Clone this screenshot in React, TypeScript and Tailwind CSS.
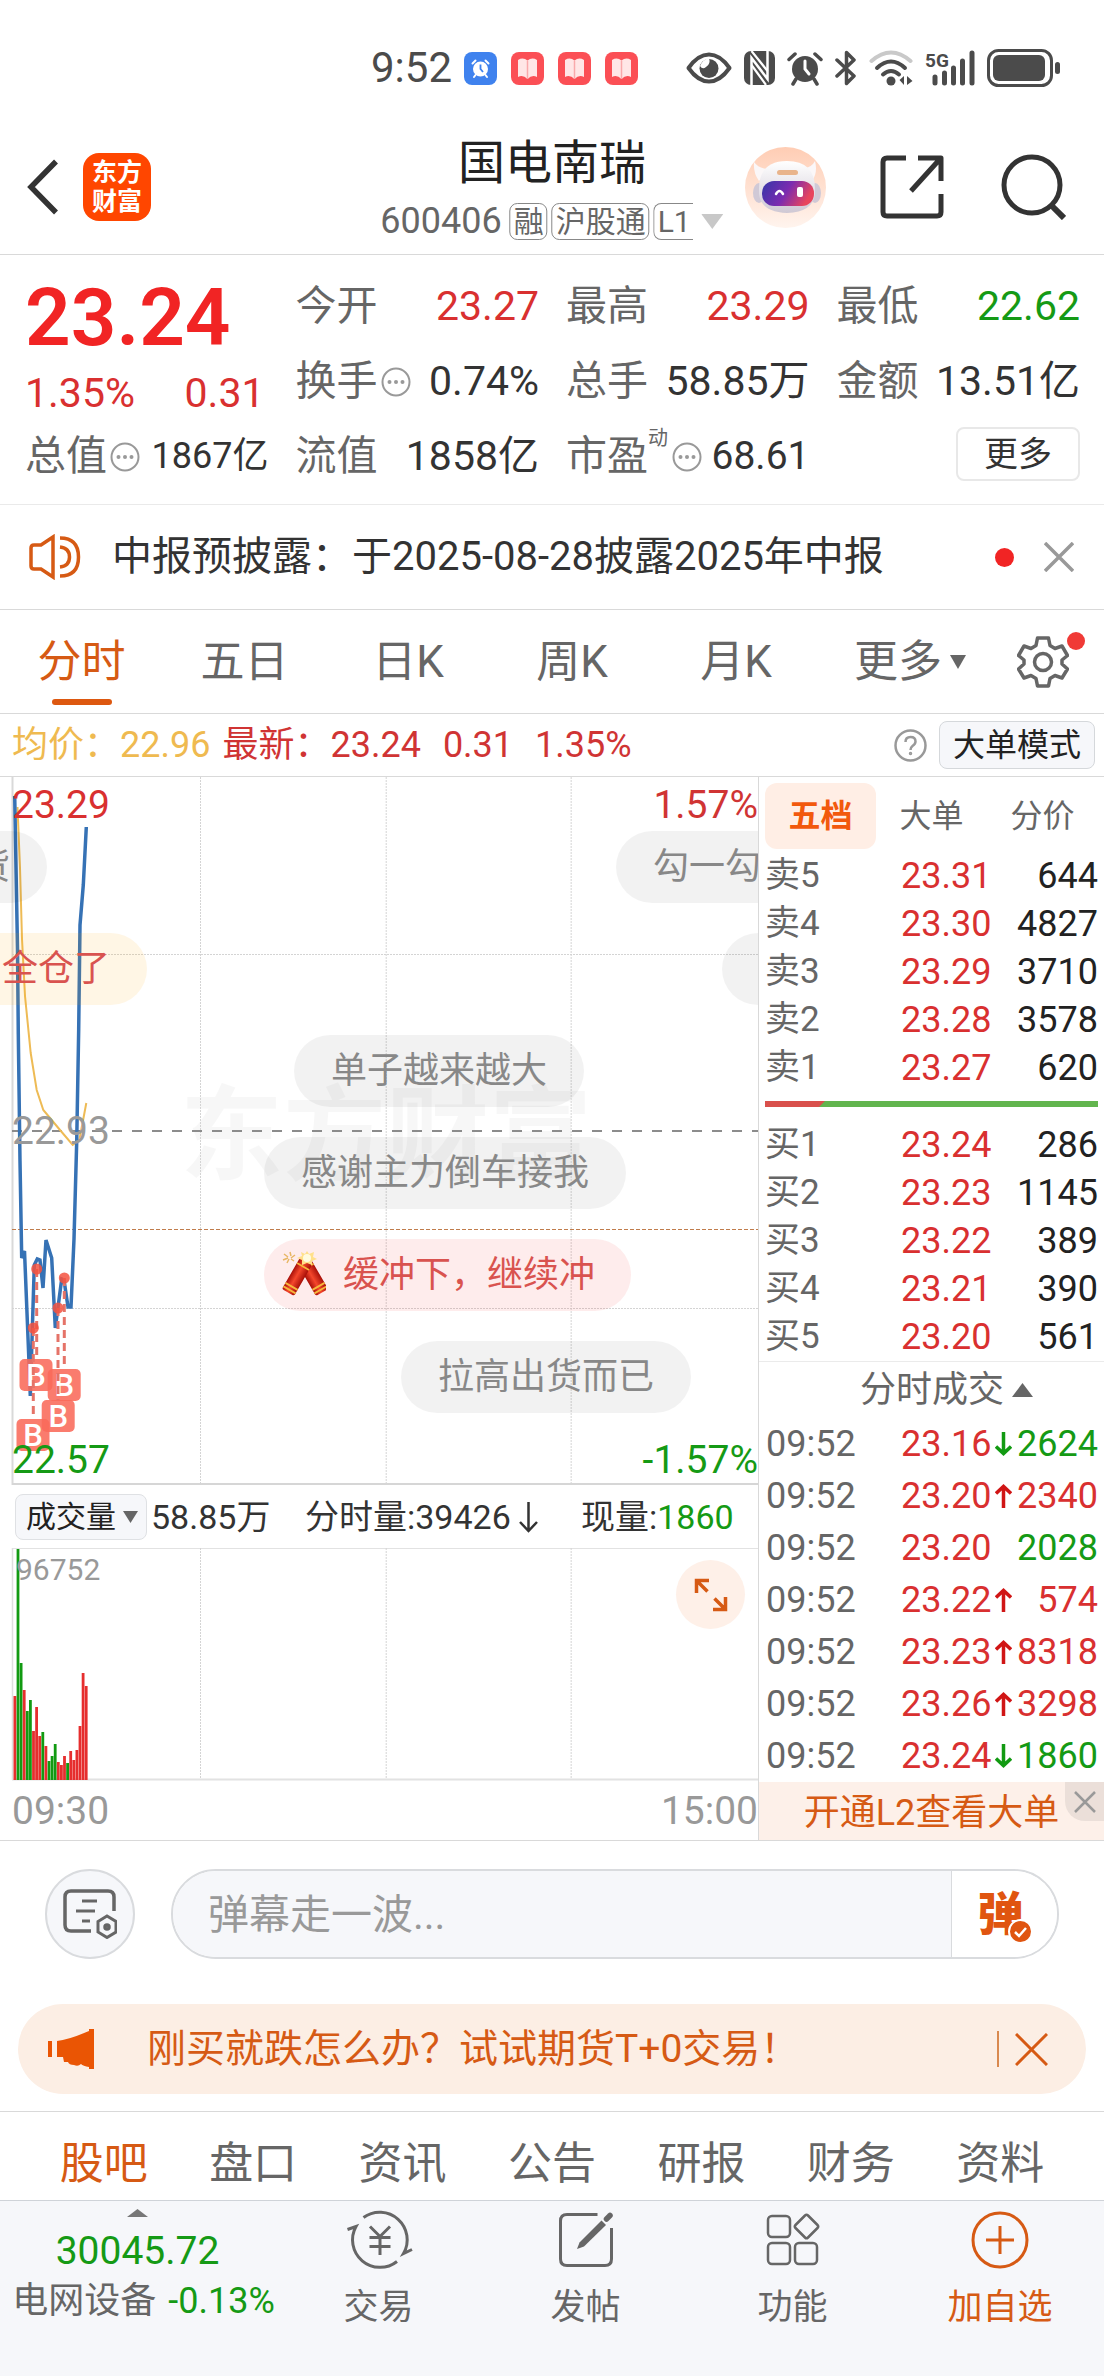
import React from "react";

const stats = {
  open: "23.27",
  high: "23.29",
  low: "22.62",
};

const asks = [
  ["卖5", "23.31", "644"],
  ["卖4", "23.30", "4827"],
  ["卖3", "23.29", "3710"],
  ["卖2", "23.28", "3578"],
  ["卖1", "23.27", "620"],
];

const bids = [
  ["买1", "23.24", "286"],
  ["买2", "23.23", "1145"],
  ["买3", "23.22", "389"],
  ["买4", "23.21", "390"],
  ["买5", "23.20", "561"],
];

type Trade = { price: string; dir: "up" | "down" | ""; qty: string; buy: boolean };
const trades: Trade[] = [
  { price: "23.16", dir: "down", qty: "2624", buy: false },
  { price: "23.20", dir: "up", qty: "2340", buy: true },
  { price: "23.20", dir: "", qty: "2028", buy: false },
  { price: "23.22", dir: "up", qty: "574", buy: true },
  { price: "23.23", dir: "up", qty: "8318", buy: true },
  { price: "23.26", dir: "up", qty: "3298", buy: true },
  { price: "23.24", dir: "down", qty: "1860", buy: false },
];

const volumes: [number, boolean][] = [
  [84, true], [231, false], [117, false], [90, true], [69, false], [80, false],
  [49, true], [73, true], [44, true], [48, false], [34, true], [19, false],
  [24, false], [36, false], [18, true], [15, true], [24, true], [17, false],
  [29, true], [20, true], [30, true], [54, true], [107, true], [94, true],
];

function AlarmGlyph() {
  return (
    <>
      <circle cx="18" cy="18" r="13" fill="currentColor" />
      <path d="M2 8.500 L8 3 M34 8.500 L28 3" stroke="currentColor" strokeWidth="3.500" strokeLinecap="round" fill="none" />
      <path d="M9 28 L6 33 M27 28 L30 33" stroke="currentColor" strokeWidth="3.500" strokeLinecap="round" />
    </>
  );
}

function BookBadge() {
  return (
    <svg width="33" height="33" viewBox="0 0 33 33" aria-hidden="true">
      <rect width="33" height="33" rx="8" fill="#fb4f55" />
      <path d="M7 8 Q12 5 16.500 8.500 Q21 5 26 8 V25 Q21 22.500 16.500 27 Q12 22.500 7 25 Z" fill="#ffe6e6" />
      <path d="M16.500 8.500 V27" stroke="#f9a9ab" strokeWidth="1.500" />
    </svg>
  );
}

function StatusBar() {
  return (
    <div className="flex h-[120px] items-center pl-[371px] pr-[44px] pt-4 text-[#4b4b4b]">
      <span className="w-[93px] text-[42px] leading-[48px]">9:52</span>
      <div className="flex gap-[14px]">
        <svg width="33" height="33" viewBox="0 0 33 33" aria-hidden="true">
          <rect width="33" height="33" rx="8" fill="#3f82ee" />
          <circle cx="16.500" cy="17" r="7.500" fill="#fff" />
          <path d="M8.500 11.500 L11.500 8.500 M24.500 11.500 L21.500 8.500 M11.500 23 L10 25 M21.500 23 L23 25" stroke="#fff" strokeWidth="2" strokeLinecap="round" />
          <path d="M16.500 12.500 V17 L19 20" stroke="#3f82ee" strokeWidth="1.800" fill="none" />
        </svg>
        <BookBadge />
        <BookBadge />
        <BookBadge />
      </div>
      <div className="ml-auto flex items-center">
        <svg className="mr-[12px]" width="46" height="32" viewBox="0 0 46 32" aria-hidden="true">
          <path d="M2.500 16 Q12 2.500 23 2.500 Q34 2.500 43.500 16 Q34 29.500 23 29.500 Q12 29.500 2.500 16 Z" fill="none" stroke="currentColor" strokeWidth="4" strokeLinejoin="round" />
          <circle cx="23" cy="16.500" r="9.500" fill="currentColor" />
          <path d="M23 6 Q25 12 20 15 Q16.500 18 14 14 Q16 8 23 6 Z" fill="#fff" />
        </svg>
        <svg className="mr-[12px]" width="31" height="34" viewBox="0 0 31 34" aria-hidden="true">
          <rect width="31" height="34" rx="7" fill="currentColor" />
          <path d="M7.500 34 V7 L23.500 28 V0" fill="none" stroke="#fff" strokeWidth="2.500" />
          <path d="M7.500 0 L23.500 20 M7.500 14 L22 34" stroke="#fff" strokeWidth="2.200" />
        </svg>
        <svg className="mr-[12px]" width="36" height="35" viewBox="0 0 36 35" aria-hidden="true">
          <AlarmGlyph />
          <path d="M18 10 V18 L22 23" stroke="#fff" strokeWidth="3" strokeLinecap="round" fill="none" />
        </svg>
        <svg className="mr-[12px]" width="22" height="36" viewBox="0 0 22 36" aria-hidden="true">
          <path d="M2 10 L19 26 L11.500 33.500 V2.500 L19 10 L2 26" fill="none" stroke="currentColor" strokeWidth="3.500" strokeLinejoin="round" strokeLinecap="round" />
        </svg>
        <svg className="mr-[11px]" width="45" height="36" viewBox="0 0 45 36" aria-hidden="true" fill="none" strokeWidth="4" strokeLinecap="round">
          <path d="M2.500 11 Q22 -6 41.500 11" stroke="#c9c9c9" />
          <path d="M8 18 Q22 5 36 18" stroke="currentColor" />
          <path d="M14 24.500 Q22 17.500 30 24.500" stroke="currentColor" />
          <circle cx="22" cy="31" r="4.500" fill="currentColor" />
          <path d="M30.500 30 L35 26 V35 Z M38 26 V35 L43.500 31 Z" fill="currentColor" />
        </svg>
        <svg className="mr-[12px] overflow-visible" width="50" height="36" viewBox="0 0 50 36" aria-hidden="true">
          <text x="0" y="17" fontSize="19" fontWeight="700" fill="currentColor">5G</text>
          <path d="M10 27 V33 M19.500 23 V33 M28.500 18 V33 M37.500 11 V33 M47 3 V33" stroke="currentColor" strokeWidth="5" strokeLinecap="round" />
        </svg>
        <svg width="73" height="38" viewBox="0 0 73 38" aria-hidden="true">
          <rect x="1.500" y="1.500" width="63" height="35" rx="10" fill="none" stroke="currentColor" strokeWidth="3" />
          <rect x="6" y="6" width="52" height="26" rx="6" fill="currentColor" />
          <rect x="68" y="13" width="5" height="12" rx="2.500" fill="currentColor" />
        </svg>
      </div>
    </div>
  );
}

function Robot() {
  return (
    <svg width="81" height="81" viewBox="0 0 81 81" aria-hidden="true">
      <defs>
        <linearGradient id="halo" x1="0" y1="0" x2="0" y2="1">
          <stop offset="0" stopColor="#ffcdb4" />
          <stop offset="1" stopColor="#fff4ee" />
        </linearGradient>
        <linearGradient id="visor" x1="0" y1="0" x2="1" y2="0.300">
          <stop offset="0" stopColor="#3437a8" />
          <stop offset="0.550" stopColor="#7b2bb0" />
          <stop offset="1" stopColor="#e8455d" />
        </linearGradient>
        <linearGradient id="shell" x1="0" y1="0" x2="0" y2="1">
          <stop offset="0" stopColor="#ffffff" />
          <stop offset="1" stopColor="#cfc8d4" />
        </linearGradient>
      </defs>
      <circle cx="40.500" cy="40.500" r="40.500" fill="url(#halo)" />
      <path d="M9 15 Q8 26 14 34 L24 22 Q14 22 9 15 Z M70 14 Q73 26 67 34 L56 21 Q66 22 70 14 Z" fill="#fbf7f8" />
      <ellipse cx="14" cy="46" rx="6" ry="10" fill="#d0c9d6" />
      <ellipse cx="70" cy="46" rx="6" ry="10" fill="#d0c9d6" />
      <path d="M14 42 Q14 14 42 14 Q70 14 70 42 V47 Q68 65 42 66 Q16 65 14 47 Z" fill="url(#shell)" />
      <rect x="32" y="23" width="21" height="5" rx="2.500" fill="#e9b48c" />
      <rect x="17" y="34" width="52" height="25" rx="12" fill="url(#visor)" />
      <path d="M31 47 Q34.500 41 38 47" fill="none" stroke="#fff" strokeWidth="2.500" strokeLinecap="round" />
      <rect x="52" y="40" width="6" height="10" rx="2" fill="#fff" />
    </svg>
  );
}

function Header() {
  return (
    <header className="relative flex h-[135px] items-center justify-between border-b border-[#d9d9d9] pl-[26px] pr-[38px]">
      <div className="flex items-center gap-[25px]">
        <button aria-label="返回">
          <svg width="32" height="56" viewBox="0 0 32 56" fill="none" stroke="#333" strokeWidth="5.500">
            <path d="M30 2.500 L5 28 L30 53.500" />
          </svg>
        </button>
        <button className="flex size-[68px] flex-col items-center justify-center rounded-2xl bg-[#ff4600] text-[25px] font-bold leading-[29px] text-white">
          <span>东方</span>
          <span>财富</span>
        </button>
      </div>
      <div className="absolute left-1/2 top-1/2 flex -translate-x-1/2 -translate-y-1/2 flex-col items-center pt-3">
        <h1 className="text-[47px] leading-[56px] text-[#222]">国电南瑞</h1>
        <button className="flex h-[60px] items-center gap-1 text-[30px] leading-[35px] text-[#666]">
          <span className="mr-1 text-[36px]">600406</span>
          <span className="rounded-lg border border-[#888] px-[3px]">融</span>
          <span className="rounded-lg border border-[#888] px-[3px]">沪股通</span>
          <span className="rounded-l-lg border border-r-0 border-[#888] px-[3px]">L1</span>
          <svg className="ml-1" width="22" height="15" viewBox="0 0 22 15" aria-hidden="true">
            <path d="M0 0 H22 L11 15 Z" fill="#c8c8c8" />
          </svg>
        </button>
      </div>
      <div className="flex items-center">
        <button aria-label="智能助手" className="mr-[54px]">
          <Robot />
        </button>
        <button aria-label="分享" className="mr-[57px]">
          <svg width="64" height="64" viewBox="0 0 64 64" fill="none" stroke="#333" strokeWidth="5">
            <path d="M26 3 H7 Q3 3 3 7 V57 Q3 61 7 61 H57 Q61 61 61 57 V39 M38 3 H61 V26 M60 4 L31 36" strokeLinejoin="round" />
          </svg>
        </button>
        <button aria-label="搜索">
          <svg width="65" height="66" viewBox="0 0 65 66" fill="none" stroke="#333" strokeWidth="5">
            <circle cx="31" cy="31" r="28" />
            <path d="M50 51 L63 64" strokeWidth="6" />
          </svg>
        </button>
      </div>
    </header>
  );
}

function More() {
  return (
    <svg className="shrink-0" width="30" height="30" viewBox="0 0 30 30" aria-hidden="true">
      <circle cx="15" cy="15" r="13.500" fill="none" stroke="#999" strokeWidth="2" />
      <circle cx="8.500" cy="15" r="2" fill="#999" />
      <circle cx="15" cy="15" r="2" fill="#999" />
      <circle cx="21.500" cy="15" r="2" fill="#999" />
    </svg>
  );
}

function Stat({ label, value, tone, info }: { label: string; value: string; tone: string; info?: boolean }) {
  return (
    <div className="flex items-center justify-between whitespace-nowrap text-[41px] leading-[75px]">
      <dt className="flex items-center gap-[3px] text-[#666]">
        {label}
        {info && <More />}
      </dt>
      <dd className={tone}>{value}</dd>
    </div>
  );
}

function Quote() {
  return (
    <section className="border-b border-[#eaeaea] pl-[25px] pr-6 pb-[10px] pt-[14px]">
      <dl className="grid grid-cols-4 grid-rows-[75px_75px_75px] gap-x-[27px]">
        <div className="row-span-2 pt-2 text-[#d93030]">
          <dd className="text-[80px] font-semibold leading-[82px] text-[#f12424]">23.24</dd>
          <dd className="flex justify-between pr-1 text-[41px] leading-[68px]">
            <span>1.35%</span>
            <span>0.31</span>
          </dd>
        </div>
        <Stat label="今开" value={stats.open} tone="text-[#d93030]" />
        <Stat label="最高" value={stats.high} tone="text-[#d93030]" />
        <Stat label="最低" value={stats.low} tone="text-[#159a15]" />
        <Stat label="换手" value="0.74%" tone="text-[#333]" info />
        <Stat label="总手" value="58.85万" tone="text-[#333]" />
        <Stat label="金额" value="13.51亿" tone="text-[#333]" />
        <div className="flex items-center justify-between whitespace-nowrap leading-[75px]">
          <dt className="flex items-center gap-[3px] text-[41px] text-[#666]">
            总值
            <More />
          </dt>
          <dd className="text-[36px] text-[#333]">1867亿</dd>
        </div>
        <Stat label="流值" value="1858亿" tone="text-[#333]" />
        <div className="flex items-center justify-between whitespace-nowrap leading-[75px]">
          <dt className="flex items-center text-[41px] text-[#666]">
            市盈
            <span className="self-start pt-[7px] text-[20px] leading-6">动</span>
            <span className="ml-1"><More /></span>
          </dt>
          <dd className="text-[39px] text-[#333]">68.61</dd>
        </div>
        <div className="flex items-start justify-end pt-2">
          <button className="h-[54px] w-[124px] rounded-lg border-2 border-[#e8e8e8] text-[34px] leading-[46px] text-[#333]">更多</button>
        </div>
      </dl>
    </section>
  );
}

function Notice() {
  return (
    <section className="flex h-[105px] items-center border-b border-[#d9d9d9] pl-[29px] pr-[30px]">
      <svg width="52" height="46" viewBox="0 0 52 46" fill="none" stroke="#d65a14" strokeWidth="3.500" aria-hidden="true">
        <path d="M24 3 L12 11 H5 Q2 11 2 14 V32 Q2 35 5 35 H12 L24 43 Z" />
        <path d="M31 4 Q49.500 4 49.500 23 Q49.500 42 31 42 M31 13 Q40.500 14 40.500 23 Q40.500 32 31 33" />
      </svg>
      <p className="ml-[31px] flex-1 whitespace-nowrap text-[40px] leading-[48px] text-[#333]">中报预披露：于2025-08-28披露2025年中报</p>
      <span className="mr-[30px] size-[19px] rounded-full bg-[#f12424]" />
      <button aria-label="关闭">
        <svg width="30" height="30" viewBox="0 0 30 30" stroke="#999" strokeWidth="3.500">
          <path d="M1 1 L29 29 M29 1 L1 29" />
        </svg>
      </button>
    </section>
  );
}

function PeriodTabs() {
  return (
    <nav className="grid h-[104px] grid-cols-[163fr_163fr_164fr_164fr_164fr_184fr_82fr] border-b border-[#d9d9d9] pr-5 text-[44px] leading-[60px] text-[#666]">
      <button className="relative text-[#d65a14]">
        分时
        <span className="absolute bottom-[8px] left-1/2 h-1.5 w-[60px] -translate-x-1/2 rounded-full bg-[#dd5810]" />
      </button>
      <button>五日</button>
      <button>日K</button>
      <button>周K</button>
      <button>月K</button>
      <button className="flex items-center justify-center gap-2">
        更多
        <svg width="16" height="14" viewBox="0 0 16 14" aria-hidden="true"><path d="M0 0 H16 L8 14 Z" fill="#666" /></svg>
      </button>
      <button aria-label="设置" className="flex items-center justify-center">
        <span className="relative">
          <svg width="52" height="52" viewBox="0 0 52 52" fill="none" stroke="#666" strokeWidth="3.500" strokeLinejoin="round">
            <path d="M20.500 2 H31.500 L33 9.500 L38 12.500 L45 10 L50.500 19.500 L45 24 V28 L50.500 33 L45 42 L38 39.500 L33 42.500 L31.500 50 H20.500 L19 42.500 L14 39.500 L7 42 L1.500 33 L7 28 V24 L1.500 19.500 L7 10 L14 12.500 L19 9.500 Z" />
            <circle cx="26" cy="26" r="8.500" />
          </svg>
          <span className="absolute -right-4 -top-1 size-[18px] rounded-full bg-[#f03a36]" />
        </span>
      </button>
    </nav>
  );
}

function Summary() {
  return (
    <section className="flex h-[63px] items-center whitespace-nowrap border-b border-[#d9d9d9] pl-3 pr-[9px] text-[36px] leading-[48px] text-[#d03434]">
      <span className="mr-3 text-[#efba50]">均价：22.96</span>
      <span>最新：23.24</span>
      <span className="ml-[22px]">0.31</span>
      <span className="ml-[22px]">1.35%</span>
      <button aria-label="帮助" className="ml-auto mr-3">
        <svg width="33" height="33" viewBox="0 0 33 33" fill="none" stroke="#999">
          <circle cx="16.500" cy="16.500" r="15" strokeWidth="2.500" />
          <path d="M11.500 13 Q11.500 8 16.500 8 Q21.500 8 21.500 12.500 Q21.500 15 18.500 17 Q16.500 18.500 16.500 21" strokeWidth="2.500" />
          <circle cx="16.500" cy="24.500" r="1" strokeWidth="1.500" />
        </svg>
      </button>
      <button className="h-12 rounded-lg border border-[#d5d8db] bg-[#f6f7fa] px-[13px] text-[32px] leading-[44px] text-[#222]">大单模式</button>
    </section>
  );
}

const marks = [
  { x: 36.7, y: 492, bx: 19.5, by: 582 },
  { x: 64.3, y: 501, bx: 47.7, by: 592 },
  { x: 58, y: 531, bx: 41.7, by: 623 },
  { x: 33.3, y: 551, bx: 16.5, by: 642 },
];

const pill = "absolute flex h-[72px] items-center whitespace-nowrap rounded-full px-[37px] text-[36px] leading-[68px]";

function Firecracker() {
  return (
    <svg className="mr-[17px]" width="46" height="48" viewBox="0 0 46 48" aria-hidden="true">
      <defs>
        <linearGradient id="tube" x1="0" y1="0" x2="1" y2="0">
          <stop offset="0" stopColor="#a80f08" />
          <stop offset="0.450" stopColor="#f5472c" />
          <stop offset="1" stopColor="#a80f08" />
        </linearGradient>
      </defs>
      <path d="M10 1 L11 5 M4 3 L8 6 M3 9 L8 7 M7 12 L9 8 M15 4 L11 7 M14 10 L11 8" stroke="#e8b765" strokeWidth="1.500" />
      <g transform="rotate(-30 25 12)">
        <rect x="18" y="12" width="14" height="34" rx="2" fill="url(#tube)" />
        <path d="M18 17 H32 M18 39 H32 M18 43 H32" stroke="#f6b73c" strokeWidth="1.800" />
      </g>
      <g transform="rotate(30 25 12)">
        <rect x="18" y="10" width="14" height="36" rx="2" fill="url(#tube)" />
        <path d="M18 16 H32 M18 39 H32 M18 43 H32" stroke="#f6b73c" strokeWidth="1.800" />
      </g>
      <path d="M27 0 L29 3 L34 1 L33 6 L37 8 L32 10 L32 14 L27 12 L22 14 L22 9 L17 7 L22 5 L21 1 L25 3 Z" fill="#ffe08a" />
      <circle cx="27" cy="7" r="4" fill="#fffbe0" />
    </svg>
  );
}

function PriceChart() {
  return (
    <div className="relative h-[708px] overflow-hidden">
      <div className="absolute bottom-[288px] left-[180px] select-none whitespace-nowrap text-[103px] font-bold leading-[120px] text-black/3" aria-hidden="true">东方财富</div>
      <svg className="absolute inset-0 h-full w-full" aria-hidden="true" fill="none">
        <path d="M12.500 0 V708" stroke="#d9d9d9" strokeWidth="2" />
        <g stroke="#d4d4d4" strokeDasharray="2 1">
          <line x1="26.450%" x2="26.450%" y1="0" y2="708" />
          <line x1="50.950%" x2="50.950%" y1="0" y2="708" />
          <line x1="75.350%" x2="75.350%" y1="0" y2="708" />
          <line x1="12" x2="100%" y1="177.500" y2="177.500" />
          <line x1="12" x2="100%" y1="531.500" y2="531.500" />
        </g>
        <line x1="12" x2="100%" y1="707" y2="707" stroke="#d6d6d6" strokeWidth="2" />
        <line x1="12" x2="100%" y1="354" y2="354" stroke="#8c8c8c" strokeWidth="2" strokeDasharray="10 10" />
        <line x1="12" x2="100%" y1="452.500" y2="452.500" stroke="#c07c4c" strokeWidth="1" strokeDasharray="4 2" />
        <path d="M17.500 30 L20 91 L22 162 L25 219 L30.700 276 L36.700 313 L43.300 333 L50 341 L60 353 L72.700 368 L79.300 363 L83.300 342 L86.300 326" stroke="#eebb55" strokeWidth="2" />
        <path d="M14.700 19 L17.500 172 L18.300 257 L20 384 L21.700 481 L24.500 474 L28.500 573 L30.300 619 L32.700 540 L34.300 488 L37.300 482 L40 483 L43 511 L46 463 L51.700 481 L55.300 551 L61.700 502 L64 503 L68 530 L71 530 L74 462 L76.700 365 L78.700 252 L80 148 L83.300 108 L86.300 50" stroke="#3672b5" strokeWidth="3.500" />
      </svg>
      <span className="absolute left-3 top-[4px] text-[39px] leading-[48px] text-[#d93030]">23.29</span>
      <span className="absolute right-0 top-[4px] text-[39px] leading-[48px] text-[#d03434]">1.57%</span>
      <span className="absolute left-3 top-[330px] text-[39px] leading-[48px] text-[#999]">22.93</span>
      <span className="absolute right-0 bottom-[1px] text-[39px] leading-[48px] text-[#159a15]">-1.57%</span>

      <svg className="absolute left-0 top-0" width="90" height="708" aria-hidden="true">
        {marks.map((m) => (
          <g key={m.by}>
            <line x1={m.x} x2={m.x} y1={m.y} y2={m.by} stroke="#e57368" strokeWidth="3" strokeDasharray="8 5" />
            <circle cx={m.x} cy={m.y} r="5.500" fill="#f4523f" opacity="0.850" />
            <rect x={m.bx} y={m.by} width="33" height="32" rx="5" fill="#f96a5a" opacity="0.880" />
            <text x={m.bx + 16.5} y={m.by + 27} fontSize="31" fontWeight="500" fill="#fff" textAnchor="middle">B</text>
          </g>
        ))}
      </svg>
      <span className="absolute bottom-[1px] left-3 text-[39px] leading-[48px] text-[#159a15]">22.57</span>

      <span className={`${pill} right-[711px] top-[54px] bg-black/5 text-[#888]`}>拉高出货</span>
      <span className={`${pill} left-[616px] top-[54px] bg-black/5 text-[#888]`}>勾一勾</span>
      <span className={`${pill} right-[611px] top-[156px] bg-[#ffab00]/10 text-[#d9534f]`}>全仓了</span>
      <span className={`${pill} left-[722px] top-[156px] bg-black/5 text-[#888]`}>冲</span>
      <span className={`${pill} left-[294px] top-[258px] bg-black/5 text-[#888]`}>单子越来越大</span>
      <span className={`${pill} left-[264px] top-[360px] bg-black/5 text-[#888]`}>感谢主力倒车接我</span>
      <span className="absolute left-[264px] top-[462px] flex h-[72px] items-center whitespace-nowrap rounded-full bg-[#f03030]/9 pl-4 pr-[36px] text-[36px] leading-[68px] text-[#d9534f]">
        <Firecracker />
        缓冲下，继续冲
      </span>
      <span className={`${pill} left-[401px] top-[564px] bg-black/5 text-[#888]`}>拉高出货而已</span>
    </div>
  );
}

function VolumeChart() {
  return (
    <>
      <div className="flex h-[63px] items-center whitespace-nowrap pl-[15px] text-[34px] leading-[48px] text-[#333]">
        <div className="relative mr-1">
          <select aria-label="指标" className="block h-[46px] w-[132px] appearance-none rounded-lg border border-[#dfe1e4] bg-[#f6f7fa] pl-[10px] text-[30px] leading-[42px] text-[#222]">
            <option>成交量</option>
          </select>
          <svg className="pointer-events-none absolute right-[9px] top-[17px]" width="15" height="12" viewBox="0 0 15 12" aria-hidden="true"><path d="M0 0 H15 L7.500 12 Z" fill="#666" /></svg>
        </div>
        <span className="w-[154px]">58.85万</span>
        <span className="flex w-[276px] items-center">
          分时量:39426
          <svg className="ml-2" width="19" height="32" viewBox="0 0 19 32" fill="none" stroke="#333" strokeWidth="2.500" aria-hidden="true"><path d="M9.500 1 V30 M1 21 L9.500 30 L18 21" /></svg>
        </span>
        <span>现量:<span className="text-[#159a15]">1860</span></span>
      </div>
      <div className="relative h-[233px]">
        <svg className="absolute inset-0 h-full w-full" aria-hidden="true">
          <line x1="12" x2="100%" y1="0.500" y2="0.500" stroke="#e2e2e2" />
          <line x1="12.500" x2="12.500" y1="0" y2="232" stroke="#dedede" strokeWidth="1.500" />
          <g stroke="#d4d4d4" strokeDasharray="2 1">
            <line x1="26.450%" x2="26.450%" y1="0" y2="232" />
            <line x1="50.950%" x2="50.950%" y1="0" y2="232" />
            <line x1="75.350%" x2="75.350%" y1="0" y2="232" />
          </g>
          <line x1="12" x2="100%" y1="231.500" y2="231.500" stroke="#e2e2e2" strokeWidth="2" />
          {volumes.map(([h, up], i) => (
            <rect key={i} x={13.5 + i * 3.1} y={232 - h} width="2.800" height={h} fill={up ? "#e62e2e" : "#129a12"} />
          ))}
        </svg>
        <span className="absolute left-4 top-1 text-[30px] leading-9 text-[#999]">96752</span>
        <button aria-label="放大" className="absolute right-[13px] top-3 flex size-[69px] items-center justify-center rounded-full bg-[#fef0e8]">
          <svg width="36" height="36" viewBox="0 0 36 36" fill="none" stroke="#d65a14" strokeWidth="3.500">
            <path d="M3.500 16 V3.500 H16 M4 4 L14.500 14.500 M32.500 20 V32.500 H20 M32 32 L21.500 21.500" />
          </svg>
        </button>
      </div>
      <div className="flex h-[59px] items-center justify-between pl-3 text-[39px] leading-[48px] text-[#999]">
        <span>09:30</span>
        <span>15:00</span>
      </div>
    </>
  );
}

function Levels({ rows, label }: { rows: string[][]; label: string }) {
  return (
    <table aria-label={label} className="w-full table-fixed text-[36px] leading-[48px]">
      <tbody>
        {rows.map(([name, price, qty]) => (
          <tr key={name} className="h-12">
            <th scope="row" className="w-[136px] text-left text-[35px] font-normal text-[#666]">{name}</th>
            <td className="w-[92px] text-[#d93030]">{price}</td>
            <td className="text-right text-[#222]">{qty}</td>
          </tr>
        ))}
      </tbody>
    </table>
  );
}

function Arrow({ up }: { up: boolean }) {
  return up ? (
    <svg width="17" height="24" viewBox="0 0 17 24" fill="none" stroke="#d01515" strokeWidth="3.500" aria-label="升"><path d="M8.500 24 V3 M1 9.500 L8.500 2.500 L16 9.500" /></svg>
  ) : (
    <svg width="17" height="24" viewBox="0 0 17 24" fill="none" stroke="#129a12" strokeWidth="3.500" aria-label="降"><path d="M8.500 0 V21 M1 14.500 L8.500 21.500 L16 14.500" /></svg>
  );
}

function OrderPanel() {
  return (
    <aside className="flex w-[346px] shrink-0 flex-col border-l border-[#d9d9d9]">
      <div className="px-1.5 pt-1.5">
        <div className="mb-[3px] grid h-[66px] grid-cols-3 text-[32px] text-[#666]">
          <button className="rounded-xl bg-[#ffeee5] font-bold text-[#f2590d]">五档</button>
          <button>大单</button>
          <button>分价</button>
        </div>
        <Levels rows={asks} label="卖盘" />
        <svg className="mb-[14px] mt-[9px] block h-1.5 w-full" viewBox="0 0 333 6" preserveAspectRatio="none" aria-hidden="true">
          <rect width="333" height="6" fill="#62b54e" />
          <path d="M0 0 H60 L54 6 H0 Z" fill="#d9504c" />
        </svg>
        <Levels rows={bids} label="买盘" />
      </div>
      <button className="flex h-[57px] items-center justify-center gap-2 border-t border-[#ebebeb] pl-[30px] text-[36px] leading-[48px] text-[#666]">
        分时成交
        <svg width="21" height="14" viewBox="0 0 21 14" aria-hidden="true"><path d="M0 14 L10.500 0 L21 14 Z" fill="#666" /></svg>
      </button>
      <table aria-label="分时成交" className="w-full table-fixed text-[36px] leading-[52px]">
        <tbody>
          {trades.map((t, i) => (
            <tr key={i} className="h-[52px]">
              <td className="w-[142px] pl-[7px] text-[#666]">09:52</td>
              <td className="w-[94px] text-[#d93030]">{t.price}</td>
              <td className="w-[17px]">{t.dir && <Arrow up={t.dir === "up"} />}</td>
              <td className={t.buy ? "pr-1.5 text-right text-[#d93030]" : "pr-1.5 text-right text-[#159a15]"}>{t.qty}</td>
            </tr>
          ))}
        </tbody>
      </table>
      <div className="relative h-[58px] bg-[#fdf0e9]">
        <a href="#l2" className="block text-center text-[36px] leading-[62px] text-[#d65a14]">开通L2查看大单</a>
        <button aria-label="关闭" className="absolute right-0 top-0 flex h-[39px] w-[39px] items-center justify-center rounded-bl-[20px] bg-[#ebdfd9]">
          <svg width="22" height="22" viewBox="0 0 22 22" stroke="#999" strokeWidth="2.500"><path d="M1 1 L21 21 M21 1 L1 21" /></svg>
        </button>
      </div>
    </aside>
  );
}

function Composer() {
  return (
    <section className="flex h-[90px] gap-9 pl-[45px] pr-[45px]">
      <button aria-label="弹幕设置" className="flex size-[90px] shrink-0 items-center justify-center rounded-full border-2 border-[#d9dbde] bg-[#f6f7fa]">
        <svg width="54" height="50" viewBox="0 0 54 50" fill="none" stroke="#666" strokeWidth="3.500">
          <path d="M28 42 H8 Q2 42 2 36 V8 Q2 2 8 2 H45 Q51 2 51 8 V22" />
          <path d="M19 12 H34 M13 22 H32 M19 32 H27" strokeWidth="3" />
          <path d="M44 27 L53 32.500 V43 L44 48.500 L35 43 V32.500 Z" strokeWidth="3" />
          <circle cx="44" cy="38" r="2" />
        </svg>
      </button>
      <div className="flex flex-1 overflow-hidden rounded-full border-2 border-[#d9dbde]">
        <input aria-label="弹幕" placeholder="弹幕走一波..." className="min-w-0 flex-1 bg-[#f6f7fa] pl-[35px] pt-1 text-[41px] outline-none placeholder:text-[#999]" />
        <button aria-label="弹幕开关" className="relative w-[106px] border-l border-[#d9dbde] bg-white pr-2 text-[46px] font-black leading-[80px] text-[#e05510]">
          弹
          <svg className="absolute right-[24px] top-[48px]" width="25" height="25" viewBox="0 0 25 25" fill="none" aria-hidden="true">
            <circle cx="12.500" cy="12.500" r="11.500" fill="#e05510" stroke="#fff" strokeWidth="2" />
            <path d="M7 13 L11 17 L18 9" stroke="#fff" strokeWidth="2.500" />
          </svg>
        </button>
      </div>
    </section>
  );
}

function Promo() {
  return (
    <section className="mx-[18px] mt-[45px] flex h-[90px] items-center rounded-full bg-[#fceee4] pl-[30px] pr-[38px] text-[#d65a14]">
      <svg width="46" height="40" viewBox="0 0 46 40" fill="#ea5504" aria-hidden="true">
        <path d="M0 12 H4 V28 H0 Z M9 12 Q20 11 41 2 V0 H46 V40 H41 V38 Q35 37 33 35 Q30 38 26 36 Q21 36 20 33 L16 33 L15 28 H9 Z" />
      </svg>
      <a href="#futures" className="ml-[53px] flex-1 whitespace-nowrap text-[39px] leading-[48px]">刚买就跌怎么办？试试期货T+0交易！</a>
      <span className="mr-4 h-9 w-0.5 bg-[#d9894f]" />
      <button aria-label="关闭">
        <svg width="33" height="33" viewBox="0 0 33 33" stroke="#d65a14" strokeWidth="3"><path d="M1 1 L32 32 M32 1 L1 32" /></svg>
      </button>
    </section>
  );
}

function BottomBar() {
  const item = "flex flex-col items-center pt-2 text-[35px] leading-[44px]";
  return (
    <footer className="grid flex-1 grid-cols-[275fr_207fr_207fr_207fr_208fr] bg-[#f6f7fa] pb-[50px] text-[#666]">
      <button className="flex flex-col items-center pt-2 text-[#159a15]">
        <svg width="21" height="8" viewBox="0 0 21 8" aria-hidden="true"><path d="M0 8 L10.500 0 L21 8 Z" fill="#777" /></svg>
        <span className="mt-[10px] text-[39px] leading-[48px]">30045.72</span>
        <span className="mt-[2px] whitespace-nowrap pl-3 text-[36px] leading-[48px]">
          <span className="mr-3 text-[#666]">电网设备</span>
          <span>-0.13%</span>
        </span>
      </button>
      <button className={item}>
        <svg width="68" height="62" viewBox="0 0 68 62" fill="none" stroke="#666" strokeWidth="3">
          <path d="M18.500 8.500 A27.500 27.500 0 0 1 58.500 44.500 L67 40.500" />
          <path d="M2.500 20.500 L11 17.500 A27.500 27.500 0 0 0 52 52.500" />
          <path d="M25 17.500 L35 27.500 L45 17.500 M35 27.500 V46 M24.500 28.500 H45.500 M24.500 37.500 H45.500" />
        </svg>
        <span className="mt-[15px]">交易</span>
      </button>
      <button className={item}>
        <svg width="56" height="62" viewBox="0 0 56 62" fill="none" stroke="#666" strokeWidth="3">
          <path d="M39.500 5.500 H9 Q2.500 5.500 2.500 12 V50 Q2.500 56.500 9 56.500 H47 Q53.500 56.500 53.500 50 V19" />
          <path d="M19 40 L21.500 33.500 L43.500 11.500 L48 16 L26 37.500 Z" fill="#666" stroke="none" />
          <path d="M48.500 10 L52 6.500" strokeWidth="5.500" strokeLinecap="round" />
        </svg>
        <span className="mt-[15px]">发帖</span>
      </button>
      <button className={item}>
        <svg width="56" height="62" viewBox="0 0 56 62" fill="none" stroke="#666" strokeWidth="2.500" strokeLinejoin="round">
          <rect x="3" y="7" width="22" height="21" rx="4" />
          <rect x="3" y="34" width="22" height="21" rx="4" />
          <rect x="30" y="34" width="22" height="21" rx="4" />
          <path d="M40 6.500 Q41.500 5 43 6.500 L52.500 16 Q54 17.500 52.500 19 L43 28.500 Q41.500 30 40 28.500 L30.500 19 Q29 17.500 30.500 16 Z" />
        </svg>
        <span className="mt-[15px]">功能</span>
      </button>
      <button className={`${item} text-[#d65a14]`}>
        <svg width="58" height="62" viewBox="0 0 58 62" fill="none" stroke="#d65a14" strokeWidth="3">
          <circle cx="29" cy="31" r="27" />
          <path d="M29 17 V45 M15 31 H43" />
        </svg>
        <span className="mt-[15px]">加自选</span>
      </button>
    </footer>
  );
}

const sections = ["盘口", "资讯", "公告", "研报", "财务", "资料"];

export default function App() {
  return (
    <div className="flex min-h-screen flex-col bg-white font-[Roboto,'Noto_Sans_CJK_SC',sans-serif]">
      <StatusBar />
      <Header />
      <Quote />
      <Notice />
      <PeriodTabs />
      <Summary />
      <main className="flex border-b border-[#d9d9d9]">
        <div className="min-w-0 flex-1">
          <PriceChart />
          <VolumeChart />
        </div>
        <OrderPanel />
      </main>
      <div className="border-b border-[#d9d9d9] pb-[17px] pt-7">
        <Composer />
        <Promo />
      </div>
      <nav className="grid h-[89px] grid-cols-7 border-b border-[#cfd3d8] px-[29px] pt-4 text-[44px] leading-[56px] text-[#666]">
        <button className="text-[#d65a14]">股吧</button>
        {sections.map((s) => (
          <button key={s}>{s}</button>
        ))}
      </nav>
      <BottomBar />
    </div>
  );
}
